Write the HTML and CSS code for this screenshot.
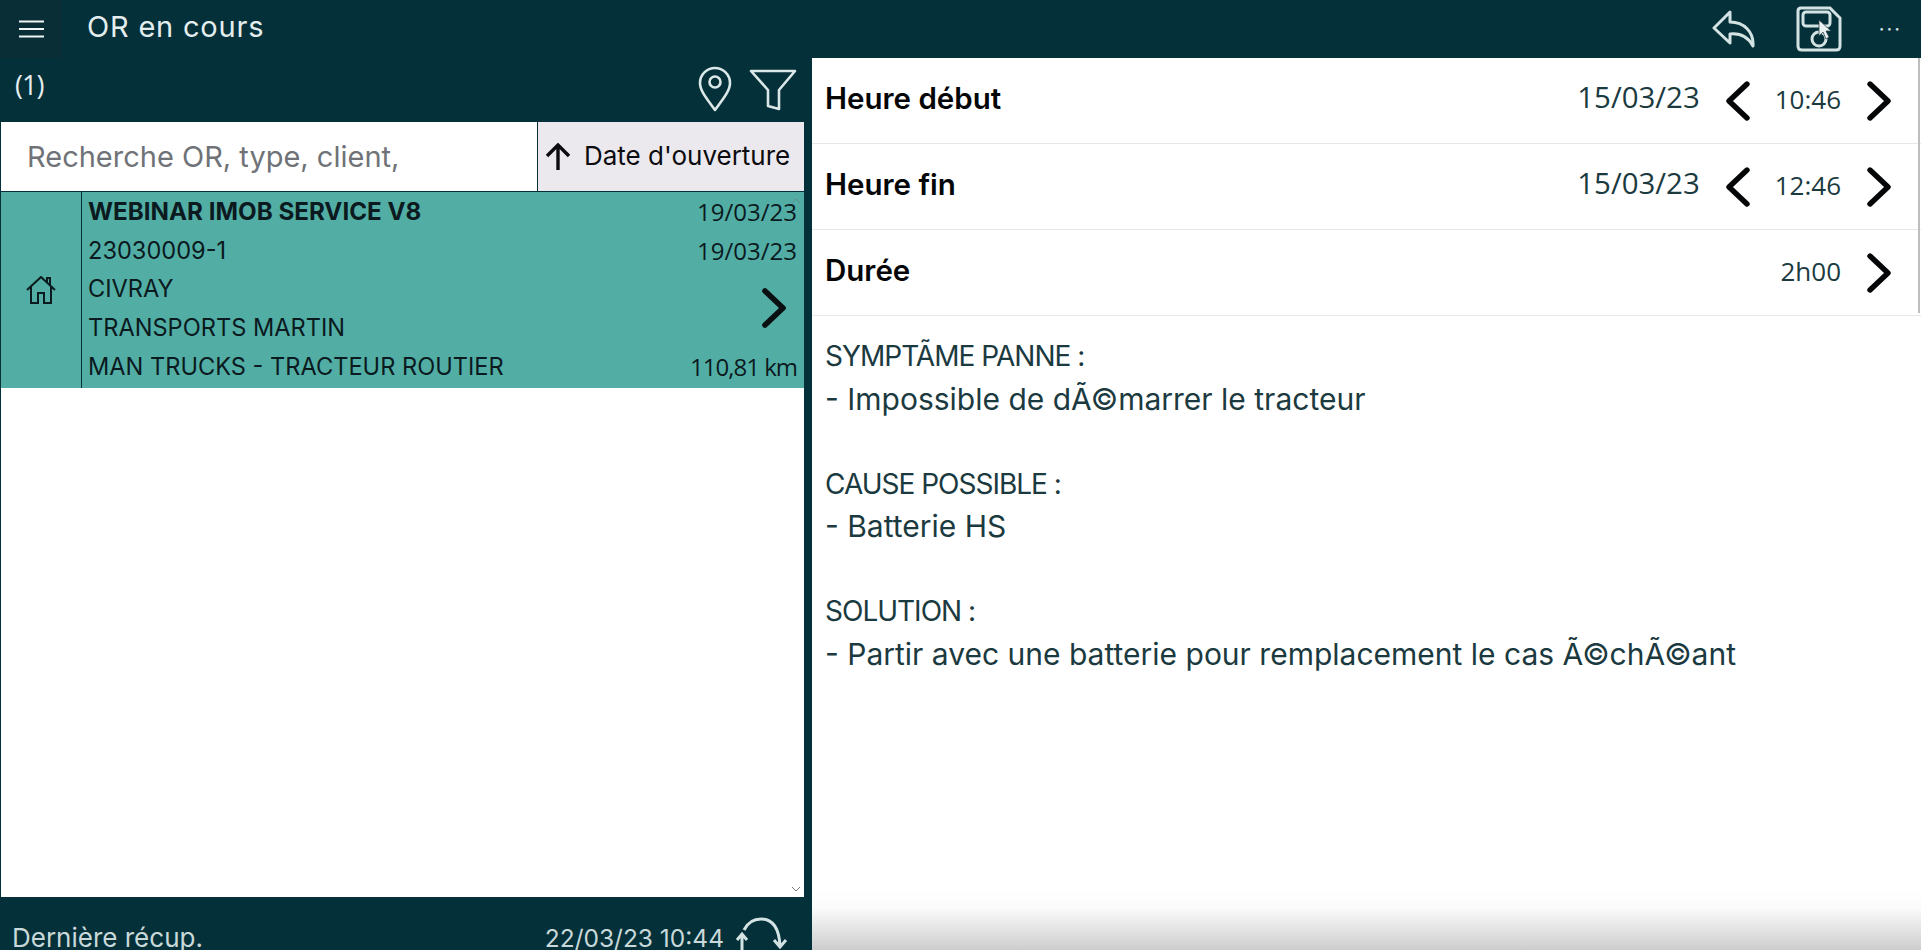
FILE: index.html
```html
<!DOCTYPE html>
<html lang="fr">
<head>
    <meta charset="UTF-8">
    <title>OR en cours</title>
    <link rel="stylesheet" href="styles.css">
</head>
<body>
<header class="topbar">
    <button class="menu-btn" aria-label="Menu">
        <svg width="26" height="18" viewBox="0 0 26 18"><path d="M0 1.5H25M0 9H25M0 16.5H25" stroke="#f0f6f6" stroke-width="1.8" fill="none"/></svg>
    </button>
    <div class="page-title">OR en cours</div>
    <div class="top-actions">
        <svg class="ico-reply" width="44" height="38" viewBox="0 0 44 38"><path d="M18 2 2 18 18 33V24C28 23 36 27 41 36 42 22 32 12 18 12Z" stroke="#d3e2e2" stroke-width="3" stroke-linejoin="round" fill="none"/></svg>
        <svg class="ico-save" width="46" height="46" viewBox="0 0 46 46"><path d="M5 2H34L44 12V40Q44 44 40 44H6Q2 44 2 40V5Q2 2 5 2Z" stroke="#d3e2e2" stroke-width="3" fill="none"/><rect x="7" y="6" width="27" height="14" rx="3" stroke="#d3e2e2" stroke-width="3" fill="none"/><circle cx="23" cy="33" r="7" stroke="#d3e2e2" stroke-width="3" fill="none"/><path d="M23 14 23 30 27 26 30 33 33 31 30 25 35 25Z" fill="#e8f0f0" stroke="#33474d" stroke-width=".8"/></svg>
        <div class="dots">···</div>
    </div>
</header>
<div class="main">
    <section class="left">
        <div class="left-head">
            <span class="count">(1)</span>
            <svg class="ico-pin" width="34" height="46" viewBox="0 0 34 46"><path d="M17 44C9 33 2 25 2 17A15 15 0 0 1 32 17C32 25 25 33 17 44Z" stroke="#dbe8e8" stroke-width="2.6" stroke-linejoin="round" fill="none"/><circle cx="17" cy="16" r="5.5" stroke="#dbe8e8" stroke-width="2.6" fill="none"/></svg>
            <svg width="48" height="42" viewBox="0 0 48 42"><path d="M2 2H46L30 21V40L19 37V21Z" stroke="#dbe8e8" stroke-width="2.6" stroke-linejoin="round" fill="none"/></svg>
        </div>
        <div class="search-row">
            <div class="search">Recherche OR, type, client,</div>
            <div class="sort">
                <svg width="26" height="28" viewBox="0 0 26 28"><path d="M13 27V3M2 13 13 2 24 13" stroke="#0c0c10" stroke-width="3.4" fill="none"/></svg>
                <span class="sort-label">Date d'ouverture</span>
            </div>
        </div>
        <div class="list">
            <div class="card">
                <div class="card-ico">
                    <svg width="30" height="28" viewBox="0 0 30 28"><path d="M1 14 15 1 29 14M5 11V27H12V17H18V27H25V11M21 6V2H24V9" stroke="#0b1a1e" stroke-width="2" fill="none"/></svg>
                </div>
                <div class="card-body">
                    <div class="line strong">WEBINAR IMOB SERVICE V8</div>
                    <div class="line num">19/03/23</div>
                    <div class="line">23030009-1</div>
                    <div class="line num">19/03/23</div>
                    <div class="line">CIVRAY</div>
                    <div class="card-next">
                        <svg width="24" height="40" viewBox="0 0 24 40"><path d="M3 3 21 20 3 37" stroke="#0a0f12" stroke-width="5.6" stroke-linecap="round" stroke-linejoin="round" fill="none"/></svg>
                    </div>
                    <div class="line">TRANSPORTS MARTIN</div>
                    <div class="line">MAN TRUCKS - TRACTEUR ROUTIER</div>
                    <div class="line num km">110,81 km</div>
                </div>
            </div>
            <svg class="scroll-up" width="10" height="6" viewBox="0 0 10 6"><path d="M1 5 5 1 9 5" stroke="#5f8f8a" fill="none"/></svg>
            <svg class="scroll-down" width="10" height="6" viewBox="0 0 10 6"><path d="M1 1 5 5 9 1" stroke="#777" fill="none"/></svg>
        </div>
        <div class="left-foot">
            <span class="foot-label">Dernière récup.</span>
            <span class="foot-date">22/03/23 10:44</span>
            <svg class="ico-sync" width="56" height="34" viewBox="0 0 56 34"><path d="M11 14C15 6 22 3 28 3 39 3 46 10 47 30M41 24 47 31 53 24M9 34V19M4 24 9 18 14 24" stroke="#d3e2e2" stroke-width="3" fill="none"/></svg>
        </div>
    </section>
    <section class="right">
        <div class="row">
            <div class="row-label">Heure début</div>
            <div class="row-date">15/03/23</div>
            <svg class="chev chev-left" width="24" height="40" viewBox="0 0 24 40"><path d="M21 3 3 20 21 37" stroke="#050607" stroke-width="5.4" stroke-linecap="round" stroke-linejoin="round" fill="none"/></svg>
            <div class="row-time">10:46</div>
            <svg class="chev" width="24" height="40" viewBox="0 0 24 40"><path d="M3 3 21 20 3 37" stroke="#050607" stroke-width="5.4" stroke-linecap="round" stroke-linejoin="round" fill="none"/></svg>
        </div>
        <div class="row">
            <div class="row-label">Heure fin</div>
            <div class="row-date">15/03/23</div>
            <svg class="chev chev-left" width="24" height="40" viewBox="0 0 24 40"><path d="M21 3 3 20 21 37" stroke="#050607" stroke-width="5.4" stroke-linecap="round" stroke-linejoin="round" fill="none"/></svg>
            <div class="row-time">12:46</div>
            <svg class="chev" width="24" height="40" viewBox="0 0 24 40"><path d="M3 3 21 20 3 37" stroke="#050607" stroke-width="5.4" stroke-linecap="round" stroke-linejoin="round" fill="none"/></svg>
        </div>
        <div class="row">
            <div class="row-label">Durée</div>
            <div class="row-time">2h00</div>
            <svg class="chev" width="24" height="40" viewBox="0 0 24 40"><path d="M3 3 21 20 3 37" stroke="#050607" stroke-width="5.4" stroke-linecap="round" stroke-linejoin="round" fill="none"/></svg>
        </div>
        <div class="notes">
            <p class="note-head">SYMPTÃME PANNE :</p>
            <p>- Impossible de dÃ©marrer le tracteur</p>
            <p>&nbsp;</p>
            <p class="note-head">CAUSE POSSIBLE :</p>
            <p>- Batterie HS</p>
            <p>&nbsp;</p>
            <p class="note-head">SOLUTION :</p>
            <p>- Partir avec une batterie pour remplacement le cas Ã©chÃ©ant</p>
        </div>
        <div class="right-scroll"></div>
    </section>
</div>
</body>
</html>
```

FILE: styles.css
```css
html, body {
    margin: 0;
    height: 950px;
    overflow: hidden;
}
body {
    background: #04303a;
    font-family: "Inter", "Open Sans", sans-serif;
    color: #1b3a40;
}
.topbar {
    height: 58px;
    display: flex;
    align-items: center;
    background: #04303a;
}
.menu-btn {
    width: 62px;
    height: 58px;
    padding: 0 0 0 1px;
    border: 0;
    background: #0a2e35;
    display: flex;
    align-items: center;
    justify-content: center;
}
.page-title {
    margin-left: 25px;
    padding-bottom: 5px;
    font-size: 29px;
    letter-spacing: 0.8px;
    color: #e4eeee;
}
.top-actions {
    margin-left: auto;
    padding-right: 19px;
    display: flex;
    align-items: center;
}
.ico-reply {
    margin-right: 40px;
}
.ico-save {
    margin-right: 37px;
}
.dots {
    color: #d3e2e2;
    font-size: 20px;
    letter-spacing: 2px;
}
.main {
    display: flex;
    height: 892px;
}
.left {
    width: 803px;
    padding-left: 1px;
    margin-right: 8px;
    display: flex;
    flex-direction: column;
    flex-shrink: 0;
}
.left-head {
    height: 64px;
    display: flex;
    align-items: center;
    padding: 0 7px 0 14px;
    gap: 16px;
}
.count {
    margin-right: auto;
    padding-bottom: 12px;
    font-family: "Open Sans", sans-serif;
    font-size: 27px;
    letter-spacing: -1px;
    color: #e4eeee;
}
.ico-pin {
    margin-top: -2px;
    margin-right: 1px;
}
.search-row {
    height: 69px;
    display: flex;
    background: #fff;
    border-bottom: 1px solid #04303a;
}
.search {
    width: 536px;
    padding-left: 26px;
    box-sizing: border-box;
    line-height: 69px;
    font-size: 29px;
    color: #6f7377;
}
.sort {
    flex: 1;
    display: flex;
    align-items: center;
    padding-left: 7px;
    gap: 13px;
    background: #ece9ee;
    border-left: 1px solid #04303a;
    font-size: 26px;
    color: #0c0c10;
    white-space: nowrap;
}
.sort-label {
    padding-bottom: 2px;
}
.list {
    flex: 1;
    position: relative;
    background: #fff;
}
.card {
    height: 196px;
    display: flex;
    background: #52aea5;
    color: #0b1a1e;
}
.card-ico {
    width: 80px;
    display: flex;
    align-items: center;
    justify-content: center;
    border-right: 1px solid #04303a;
}
.card-body {
    flex: 1;
    padding: 0 7px 0 6px;
    display: grid;
    grid-template-columns: 1fr auto;
    grid-auto-rows: 38.8px;
    align-items: center;
}
.card-body .line {
    font-size: 23.6px;
}
.card-body .strong {
    font-size: 24.2px;
    font-weight: 700;
}
.card-body .num {
    font-family: "Open Sans", sans-serif;
    font-size: 24px;
    text-align: right;
    justify-self: end;
}
.card-body .km {
    letter-spacing: -1px;
}
.card-next {
    grid-column: 2;
    grid-row: 3 / span 2;
    justify-self: end;
    display: flex;
    padding-right: 11px;
}
.scroll-up {
    position: absolute;
    top: 6px;
    right: 3px;
}
.scroll-down {
    position: absolute;
    bottom: 5px;
    right: 3px;
}
.left-foot {
    height: 53px;
    overflow: hidden;
    display: flex;
    padding: 22px 15px 0 11px;
    box-sizing: border-box;
    line-height: 36px;
    color: #c9d9d9;
}
.foot-label {
    font-size: 26px;
    padding-top: 1px;
}
.foot-date {
    margin-left: auto;
    margin-right: 9px;
    font-size: 24.5px;
    padding-top: 1px;
}
.ico-sync {
    margin-top: -3px;
    flex-shrink: 0;
}
.right {
    flex: 1;
    position: relative;
    background: linear-gradient(to bottom, #fff 830px, #fbfbfb 850px, #cdcdcd 892px);
}
.row {
    height: 85px;
    display: flex;
    align-items: center;
    justify-content: flex-end;
    padding: 0 30px 0 13px;
    border-bottom: 1px solid #e6e8e8;
}
.row-label {
    margin-right: auto;
    padding-bottom: 6px;
    font-size: 29.5px;
    font-weight: 600;
    color: #050607;
}
.row-date {
    font-family: "Open Sans", sans-serif;
    font-size: 29.4px;
    margin-right: 26px;
    padding-bottom: 7px;
}
.row-time {
    font-family: "Open Sans", sans-serif;
    font-size: 26px;
    margin-right: 26px;
    padding-bottom: 3px;
}
.chev-left {
    margin-right: 25px;
}
.notes {
    padding: 19px 13px 0;
    font-size: 30px;
    line-height: 42.5px;
}
.notes p {
    margin: 0;
}
.notes .note-head {
    font-size: 28px;
    letter-spacing: -1px;
}
.right-scroll {
    position: absolute;
    top: 0;
    right: 1px;
    width: 2px;
    height: 255px;
    background: #bdbdbd;
}
```
